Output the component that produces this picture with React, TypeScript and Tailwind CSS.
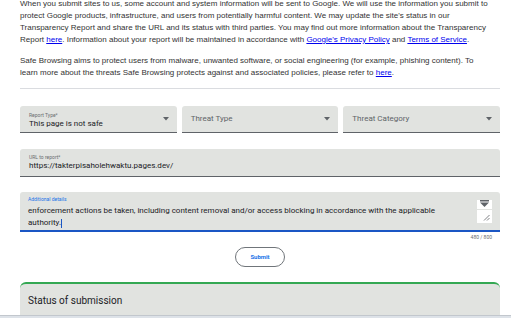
import React from 'react';

function Caret({ className = '' }: { className?: string }) {
  return (
    <svg width="6" height="4" viewBox="0 0 6 4" className={className}>
      <path d="M0 0 L6 0 L3 3.5 Z" fill="#5f6368" />
    </svg>
  );
}

function SelectField({ label, value, placeholder }: { label?: string; value?: string; placeholder?: string }) {
  return (
    <div className="flex-1 h-[27px] bg-[#e1e3e0] rounded-t-[3px] border-b border-[#5f6368] flex items-center justify-between pl-[9px] pr-[8px]">
      {label ? (
        <div className="flex flex-col pt-[2px]">
          <span className="text-[5px] leading-[7px] text-[#6b6e70]">{label}</span>
          <span className="text-[8px] leading-[10px] text-[#202124]">{value}</span>
        </div>
      ) : (
        <span className="text-[8px] text-[#5f6368]">{placeholder}</span>
      )}
      <Caret />
    </div>
  );
}

export default function App() {
  const link = 'text-[#0000ee] underline';
  return (
    <div className="w-[511px] h-[318px] overflow-hidden bg-white flex flex-col font-['Liberation_Sans',Arial,sans-serif]">
      <div className="pl-[20px] pr-[11px] -mt-[2px] text-[8px] leading-[12px] text-[#333] whitespace-nowrap">
        <p>
          When you submit sites to us, some account and system information will be sent to Google. We will use the information you submit to
          <br />
          protect Google products, infrastructure, and users from potentially harmful content. We may update the site's status in our
          <br />
          Transparency Report and share the URL and its status with third parties. You may find out more information about the Transparency
          <br />
          Report <span className={link}>here</span>. Information about your report will be maintained in accordance with{' '}
          <span className={link}>Google's Privacy Policy</span> and <span className={link}>Terms of Service</span>.
        </p>
        <p className="mt-[9px]">
          Safe Browsing aims to protect users from malware, unwanted software, or social engineering (for example, phishing content). To
          <br />
          learn more about the threats Safe Browsing protects against and associated policies, please refer to{' '}
          <span className={link}>here</span>.
        </p>
      </div>

      <div className="ml-[20px] mr-[11px] mt-[9px] h-px bg-[#dadce0]" />

      <div className="pl-[20px] pr-[11px] font-['Roboto',sans-serif]">
        <div className="flex gap-[5px] mt-[18px]">
          <SelectField label="Report Type*" value="This page is not safe" />
          <SelectField placeholder="Threat Type" />
          <SelectField placeholder="Threat Category" />
        </div>

        <div className="mt-[16px] h-[28px] bg-[#e1e3e0] rounded-t-[3px] border-b border-[#5f6368] flex flex-col justify-center pl-[9px]">
          <span className="text-[5px] leading-[7px] text-[#6b6e70]">URL to report*</span>
          <span className="text-[8px] leading-[10px] text-[#202124]">https://takterpisaholehwaktu.pages.dev/</span>
        </div>

        <div className="mt-[15px] h-[40px] bg-[#e1e3e0] rounded-t-[3px] border-b-2 border-[#1a56c4] flex pl-[8px] pr-[8px] pt-[4px]">
          <div className="flex-1 flex flex-col">
            <span className="text-[5px] leading-[7px] text-[#1a73e8]">Additional details</span>
            <span className="text-[8px] leading-[12px] text-[#202124] mt-[2px]">
              enforcement actions be taken, including content removal and/or access blocking in accordance with the applicable
              <br />
              authority.<span className="inline-block w-px h-[9px] bg-[#1a56c4] align-middle" />
            </span>
          </div>
          <div className="flex flex-col items-center w-[15px] pt-[4px]">
            <div className="w-[15px] h-[9px] bg-white flex items-start justify-center">
              <svg width="9" height="7" viewBox="0 0 9 7">
                <rect x="0" y="0" width="9" height="1.5" fill="#5f6368" />
                <path d="M0 2.5 L9 2.5 L4.5 7 Z" fill="#5f6368" />
              </svg>
            </div>
            <div className="w-[15px] h-[13px] bg-white mt-px flex items-end justify-end p-[2px]">
              <svg width="7" height="7" viewBox="0 0 7 7">
                <path d="M1 6.5 L6.5 1 M4 6.5 L6.5 4" stroke="#5f6368" strokeWidth="0.8" />
              </svg>
            </div>
          </div>
        </div>

        <div className="flex justify-end pr-[8px] pt-[2px]">
          <span className="text-[5px] text-[#6b6e70]">480 / 800</span>
        </div>

        <div className="flex justify-center mt-[5px]">
          <div className="w-[50px] h-[20px] rounded-full border border-[#70757a] flex items-center justify-center text-[6px] font-bold text-[#1a73e8]">
            Submit
          </div>
        </div>

        <div className="mt-[15px] h-[40px] bg-[#e1e3e0] rounded-t-[6px] border-t-2 border-[#34a853] pl-[8px] pt-[3px]">
          <span className="text-[10px] text-[#202124]">Status of submission</span>
        </div>
      </div>
      <div className="h-[6px] bg-[#dde2e8] border-t border-[#c2c7cd] -mt-[7px] relative" />
    </div>
  );
}
